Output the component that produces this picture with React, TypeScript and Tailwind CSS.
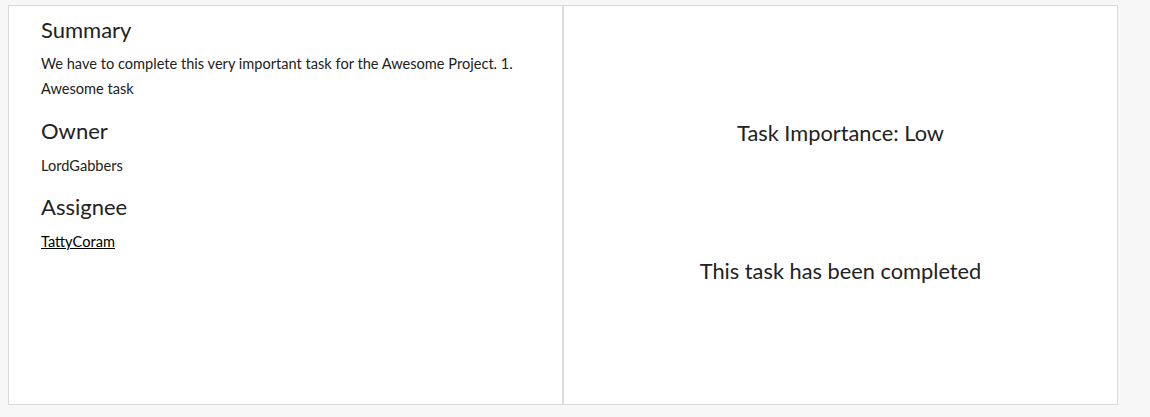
export default function App() {
  return (
    <div
      className="min-h-[417px] w-full bg-[#f7f7f7] pl-[8px] pt-[5px] text-[#222]"
      style={{ fontFamily: "Lato, 'Noto Sans', sans-serif" }}
    >
      <div className="flex h-[400px] w-[1110px]">
        <section className="w-[555px] border border-[#dadada] border-r-[#dcdce0] bg-white pl-[32px] pr-[32px] pt-[10px]">
          <h2 className="text-[22px] leading-[28px]">Summary</h2>
          <p className="mt-[7px] text-[14.6px] leading-[25px]">
            We have to complete this very important task for the Awesome
            Project. 1. Awesome task
          </p>

          <h2 className="mt-[16px] text-[22px] leading-[28px]">Owner</h2>
          <p className="mt-[8px] text-[14.6px] leading-[25px]">LordGabbers</p>

          <h2 className="mt-[15px] text-[22px] leading-[28px]">Assignee</h2>
          <p className="mt-[8px] text-[14.6px] leading-[25px]">
            <a href="#" className="text-black underline">
              TattyCoram
            </a>
          </p>
        </section>

        <section className="flex w-[555px] flex-col items-center border border-[#dadada] border-l-[#dcdce0] bg-white pt-[112px]">
          <div className="text-[21.8px] leading-[30px]">Task Importance: Low</div>
          <div className="mt-[108px] text-[21.8px] leading-[30px]">
            This task has been completed
          </div>
        </section>
      </div>
    </div>
  );
}
